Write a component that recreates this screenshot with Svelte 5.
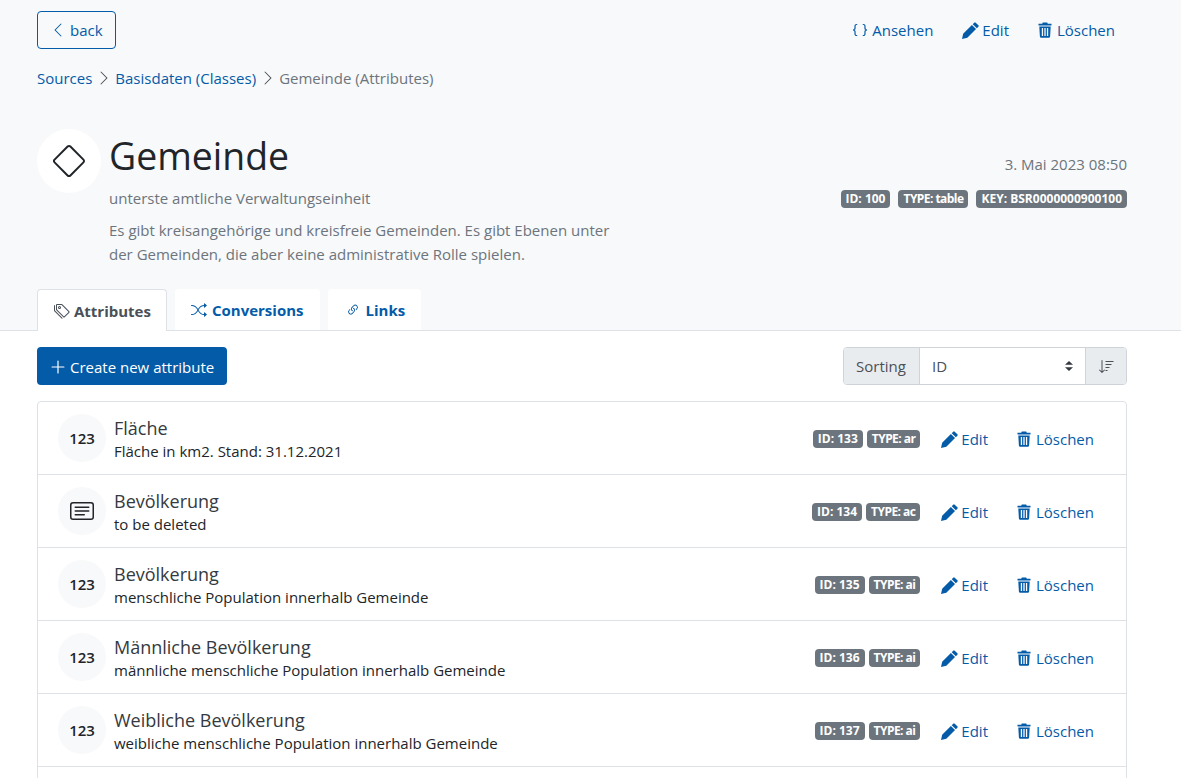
<script>
	const rows = [
		{ name: 'Fläche', desc: 'Fläche in km2. Stand: 31.12.2021', id: 133, type: 'ar', icon: 'num' },
		{ name: 'Bevölkerung', desc: 'to be deleted', id: 134, type: 'ac', icon: 'text' },
		{ name: 'Bevölkerung', desc: 'menschliche Population innerhalb Gemeinde', id: 135, type: 'ai', icon: 'num' },
		{ name: 'Männliche Bevölkerung', desc: 'männliche menschliche Population innerhalb Gemeinde', id: 136, type: 'ai', icon: 'num' },
		{ name: 'Weibliche Bevölkerung', desc: 'weibliche menschliche Population innerhalb Gemeinde', id: 137, type: 'ai', icon: 'num' }
	];
</script>

{#snippet pencil()}
	<svg viewBox="0 0 16 16" width="17" height="17" fill="currentColor"><path d="M12.900.600 15.400 3.100a1 1 0 0 1 0 1.400L14 5.900 10.100 2 11.500.600a1 1 0 0 1 1.400 0zM9.300 2.800l3.900 3.900L5 14.900 0 16l1.100-5z"/></svg>
{/snippet}

{#snippet trash()}
	<svg viewBox="0 0 14 16" width="14" height="16" fill="currentColor"><path fill-rule="evenodd" d="M4.800.500h4.400l.6 1.200H13.500V3.500H.500V1.700H4.200zM1.300 4.500h11.400l-.6 10a1.300 1.300 0 0 1-1.300 1.200H3.200a1.300 1.300 0 0 1-1.300-1.200zM3.800 6v8h1.300V6zM6.350 6v8h1.300V6zM8.900 6v8h1.300V6z"/></svg>
{/snippet}

<div class="page">
	<div class="head">
		<div class="topbar">
			<button class="back">
				<svg viewBox="0 0 16 16" width="16" height="16" fill="currentColor"><path fill-rule="evenodd" d="M11.354 1.646a.5.5 0 0 1 0 .708L5.707 8l5.647 5.646a.5.5 0 0 1-.708.708l-6-6a.5.5 0 0 1 0-.708l6-6a.5.5 0 0 1 .708 0z"/></svg>
				back
			</button>
			<div class="actions">
				<a href="#a">
					<svg viewBox="0 0 16 16" width="16" height="16" fill="currentColor"><path d="M2.114 8.063V7.900c1.005-.102 1.497-.615 1.497-1.600V4.503c0-1.094.39-1.538 1.354-1.538h.273V2h-.376C3.250 2 2.430 2.820 2.430 4.340v1.450c0 1.006-.410 1.490-1.300 1.490v1.440c.890 0 1.300.484 1.300 1.490v1.450c0 1.520.820 2.340 2.432 2.340h.376v-.965h-.273c-.964 0-1.354-.444-1.354-1.538V9.700c0-.985-.492-1.498-1.497-1.637zm11.772 0V7.900c-1.005-.102-1.497-.615-1.497-1.600V4.503c0-1.094-.39-1.538-1.354-1.538h-.273V2h.376c1.612 0 2.432.82 2.432 2.340v1.450c0 1.006.41 1.490 1.300 1.490v1.440c-.89 0-1.300.484-1.300 1.490v1.450c0 1.520-.82 2.340-2.432 2.340h-.376v-.965h.273c.964 0 1.354-.444 1.354-1.538V9.700c0-.985.492-1.498 1.497-1.637z"/></svg>
					Ansehen
				</a>
				<a class="edit" href="#e">{@render pencil()} Edit</a>
				<a class="del" href="#d">{@render trash()} Löschen</a>
			</div>
		</div>

		<nav class="crumbs">
			<a href="#s">Sources</a>
			<svg viewBox="0 0 16 16" width="16" height="16" fill="currentColor"><path fill-rule="evenodd" d="M4.646 1.646a.5.5 0 0 1 .708 0l6 6a.5.5 0 0 1 0 .708l-6 6a.5.5 0 0 1-.708-.708L10.293 8 4.646 2.354a.5.5 0 0 1 0-.708z"/></svg>
			<a href="#b">Basisdaten (Classes)</a>
			<svg viewBox="0 0 16 16" width="16" height="16" fill="currentColor"><path fill-rule="evenodd" d="M4.646 1.646a.5.5 0 0 1 .708 0l6 6a.5.5 0 0 1 0 .708l-6 6a.5.5 0 0 1-.708-.708L10.293 8 4.646 2.354a.5.5 0 0 1 0-.708z"/></svg>
			<span>Gemeinde (Attributes)</span>
		</nav>

		<div class="title-row">
			<div class="logo">
				<svg viewBox="0 0 16 16" width="32" height="32" fill="#212529"><path d="M6.950.435c.580-.580 1.520-.580 2.100 0l6.515 6.516c.58.580.58 1.519 0 2.098L9.050 15.565c-.580.580-1.519.580-2.098 0L.435 9.050a1.482 1.482 0 0 1 0-2.098L6.950.435zm1.400.7a.495.495 0 0 0-.7 0L1.134 7.650a.495.495 0 0 0 0 .700l6.516 6.516a.495.495 0 0 0 .7 0l6.516-6.516a.495.495 0 0 0 0-.7L8.350 1.134z"/></svg>
			</div>
			<div class="title-text">
				<h1>Gemeinde</h1>
				<div class="muted sub">unterste amtliche Verwaltungseinheit</div>
				<p class="muted">Es gibt kreisangehörige und kreisfreie Gemeinden. Es gibt Ebenen unter der Gemeinden, die aber keine administrative Rolle spielen.</p>
			</div>
			<div class="meta">
				<div class="muted date">3. Mai 2023 08:50</div>
				<div class="badges">
					<span class="badge">ID: 100</span>
					<span class="badge type">TYPE: table</span>
					<span class="badge">KEY: BSR0000000900100</span>
				</div>
			</div>
		</div>

		<div class="tabs">
			<a class="tab active" href="#1">
				<svg viewBox="0 0 16 16" width="16" height="16" fill="currentColor"><path d="M3 2v4.586l7 7L14.586 9l-7-7H3zM2 2a1 1 0 0 1 1-1h4.586a1 1 0 0 1 .707.293l7 7a1 1 0 0 1 0 1.414l-4.586 4.586a1 1 0 0 1-1.414 0l-7-7A1 1 0 0 1 2 6.586V2z"/><path d="M5.500 5a.5.5 0 1 1 0-1 .5.5 0 0 1 0 1zm0 1a1.500 1.500 0 1 0 0-3 1.500 1.500 0 0 0 0 3zM1 7.086a1 1 0 0 0 .293.707L8.750 15.250l-.043.043a1 1 0 0 1-1.414 0l-7-7A1 1 0 0 1 0 7.586V3a1 1 0 0 1 1-1v5.086z"/></svg>
				Attributes
			</a>
			<a class="tab conv" href="#2">
				<svg viewBox="0 0 16 16" width="16" height="16" fill="currentColor"><path fill-rule="evenodd" d="M0 3.500A.5.5 0 0 1 .5 3H1c2.202 0 3.827 1.240 4.874 2.418.49.552.865 1.102 1.126 1.532.26-.43.636-.980 1.126-1.532C9.173 4.240 10.798 3 13 3v1c-1.798 0-3.173 1.010-4.126 2.082A9.624 9.624 0 0 0 7.556 8a9.624 9.624 0 0 0 1.317 1.918C9.828 10.990 11.204 12 13 12v1c-2.202 0-3.827-1.240-4.874-2.418A10.595 10.595 0 0 1 7 9.050c-.26.430-.636.980-1.126 1.532C4.827 11.760 3.202 13 1 13H.5a.5.5 0 0 1 0-1H1c1.798 0 3.173-1.010 4.126-2.082A9.624 9.624 0 0 0 6.444 8a9.624 9.624 0 0 0-1.317-1.918C4.172 5.010 2.796 4 1 4H.5a.5.5 0 0 1-.5-.5z"/><path d="M13 5.466V1.534a.25.25 0 0 1 .41-.192l2.360 1.966c.12.100.12.284 0 .384l-2.360 1.966a.25.25 0 0 1-.41-.192zm0 9v-3.932a.25.25 0 0 1 .41-.192l2.360 1.966c.12.100.12.284 0 .384l-2.360 1.966a.25.25 0 0 1-.41-.192z"/></svg>
				Conversions
			</a>
			<a class="tab links" href="#3">
				<svg viewBox="0 0 16 16" width="14" height="14" fill="currentColor"><path d="M4.715 6.542 3.343 7.914a3 3 0 1 0 4.243 4.243l1.828-1.829A3 3 0 0 0 8.586 5.500L8 6.086a1.002 1.002 0 0 0-.154.199 2 2 0 0 1 .861 3.337L6.880 11.450a2 2 0 1 1-2.830-2.830l.793-.792a4.018 4.018 0 0 1-.128-1.287z"/><path d="M6.586 4.672A3 3 0 0 0 7.414 9.500l.775-.776a2 2 0 0 1-.896-3.346L9.120 3.550a2 2 0 1 1 2.830 2.830l-.793.792c.112.420.155.855.128 1.287l1.372-1.372a3 3 0 1 0-4.243-4.243L6.586 4.672z"/></svg>
				Links
			</a>
		</div>
	</div>

	<div class="content">
		<div class="toolbar">
			<button class="create">
				<svg viewBox="0 0 16 16" width="16" height="16" fill="currentColor"><path d="M8 1.500a.6.6 0 0 1 .6.6v5.300h5.300a.6.6 0 0 1 0 1.200H8.600v5.300a.6.6 0 0 1-1.200 0V8.600H2.100a.6.6 0 0 1 0-1.200h5.300V2.100a.6.6 0 0 1 .6-.6z"/></svg>
				Create new attribute
			</button>
			<div class="sorting">
				<span class="addon label">Sorting</span>
				<div class="select">
					ID
					<svg viewBox="0 0 16 16" width="16" height="16" fill="#343a40"><path d="M8 3 12 6.800H4zM8 13 4 9.200h8z"/></svg>
				</div>
				<span class="addon sort-btn">
					<svg viewBox="0 0 16 16" width="16" height="16" fill="#495057"><path d="M4.500 2.500a.5.500 0 0 0-1 0v10.800L1.850 11.650a.5.500 0 0 0-.7.7l2.500 2.500a.5.500 0 0 0 .7 0l2.500-2.500a.5.500 0 0 0-.7-.7L4.500 13.300zM7.500 3h8v1h-8zM7.500 6h6v1h-6zM7.500 9h4v1h-4zM7.500 12h2v1h-2z"/></svg>
				</span>
			</div>
		</div>

		<div class="list">
			{#each rows as row}
				<div class="row">
					<div class="avatar">
						{#if row.icon === 'num'}
							123
						{:else}
							<svg viewBox="0 0 16 16" width="24" height="24" fill="#212529"><path d="M14 3a1 1 0 0 1 1 1v8a1 1 0 0 1-1 1H2a1 1 0 0 1-1-1V4a1 1 0 0 1 1-1h12zM2 2a2 2 0 0 0-2 2v8a2 2 0 0 0 2 2h12a2 2 0 0 0 2-2V4a2 2 0 0 0-2-2H2z"/><path d="M3 5.500a.5.5 0 0 1 .5-.5h9a.5.5 0 0 1 0 1h-9a.5.5 0 0 1-.5-.5zM3 8a.5.5 0 0 1 .5-.5h9a.5.5 0 0 1 0 1h-9A.5.5 0 0 1 3 8zm0 2.500a.5.5 0 0 1 .5-.5h6a.5.5 0 0 1 0 1h-6a.5.5 0 0 1-.5-.5z"/></svg>
						{/if}
					</div>
					<div class="row-text">
						<div class="row-name">{row.name}</div>
						<div class="row-desc">{row.desc}</div>
					</div>
					<div class="row-badges">
						<span class="badge">ID: {row.id}</span>
						<span class="badge type">TYPE: {row.type}</span>
					</div>
					<a class="row-link edit" href="#e">{@render pencil()} Edit</a>
					<a class="row-link del" href="#d">{@render trash()} Löschen</a>
				</div>
			{/each}
			<div class="row-more"></div>
		</div>
	</div>
</div>

<style>
	:global(*) {
		box-sizing: border-box;
	}

	:global(html), :global(body) {
		overflow: hidden;
	}

	:global(body) {
		background: #fff;
		color: #212529;
		font-family: 'Open Sans', 'Noto Sans', sans-serif;
		font-size: 15px;
		line-height: 24px;
	}

	.page {
		height: 778px;
		overflow: hidden;
	}

	a {
		color: #045ba8;
		text-decoration: none;
	}

	svg {
		display: block;
		flex-shrink: 0;
	}

	.head {
		background: #f8f9fa;
		border-bottom: 1px solid #dee2e6;
		height: 331px;
		padding: 11px 54px 0 37px;
		display: flex;
		flex-direction: column;
	}

	.topbar {
		display: flex;
		justify-content: space-between;
	}

	.back {
		display: flex;
		align-items: center;
		gap: 4px;
		width: 79px;
		height: 38px;
		padding: 0 0 0 12px;
		background: transparent;
		border: 1px solid #045ba8;
		border-radius: 4px;
		color: #045ba8;
		font: inherit;
	}

	.actions {
		display: flex;
		align-items: center;
		gap: 29px;
		padding-right: 12px;
		height: 38px;
	}

	.actions a {
		display: flex;
		align-items: center;
		gap: 4px;
	}

	.actions a.edit {
		gap: 3px;
	}

	.actions a.del {
		gap: 5px;
	}

	.crumbs {
		display: flex;
		align-items: center;
		gap: 3.5px;
		margin-top: 17px;
		height: 24px;
		color: #6c757d;
	}

	.crumbs svg {
		color: #495057;
	}

	.title-row {
		display: flex;
		margin-top: 39px;
	}

	.logo {
		width: 64px;
		height: 64px;
		border-radius: 50%;
		background: #fff;
		display: flex;
		align-items: center;
		justify-content: center;
		flex-shrink: 0;
	}

	.title-text {
		margin-left: 8px;
		width: 520px;
	}

	h1 {
		margin: -1px 0 0;
		font-size: 37.4px;
		font-weight: 400;
		line-height: 56px;
	}

	.muted {
		color: #6c757d;
	}

	.sub {
		margin-top: 2px;
	}

	.title-text p {
		margin: 8px 0 0;
		line-height: 24px;
	}

	.meta {
		margin-left: auto;
		text-align: right;
		padding-top: 23px;
	}

	.badges {
		display: flex;
		justify-content: flex-end;
		gap: 8px;
		margin-top: 14px;
	}

	.badge {
		display: inline-block;
		padding: 0 5px;
		height: 18px;
		line-height: 18px;
		background: #6c757d;
		color: #fff;
		font-size: 12px;
		font-weight: 700;
		border-radius: 4px;
		white-space: nowrap;
	}

	.badge.type {
		letter-spacing: -0.55px;
	}

	.tabs {
		display: flex;
		gap: 8px;
		margin-top: auto;
		height: 41px;
	}

	.tab {
		display: flex;
		align-items: center;
		gap: 4px;
		padding: 0 16px;
		background: #fff;
		border-radius: 4px 4px 0 0;
		font-weight: 700;
	}

	.tab.active {
		color: #495057;
		border: 1px solid #dee2e6;
		border-bottom: 0;
		padding: 0 15px 0 16px;
		height: 42px;
		position: relative;
	}

	.tab.conv {
		gap: 5px;
		padding-right: 16px;
	}

	.tab.links {
		gap: 6px;
		padding: 0 16px 0 18px;
	}

	.content {
		padding: 16px 54px 0 37px;
	}

	.toolbar {
		display: flex;
		justify-content: space-between;
	}

	.create {
		display: flex;
		align-items: center;
		gap: 4px;
		width: 190px;
		height: 38px;
		padding: 1px 0 0 13px;
		background: #045ba8;
		border: 0;
		border-radius: 4px;
		color: #fff;
		font: inherit;
	}

	.sorting {
		display: flex;
		height: 38px;
		width: 284px;
		border: 1px solid #ced4da;
		border-radius: 4px;
		overflow: hidden;
	}

	.addon {
		display: flex;
		align-items: center;
		padding: 0 12px;
		background: #e9ecef;
		color: #495057;
	}

	.label {
		width: 75px;
	}

	.select {
		flex: 1;
		display: flex;
		align-items: center;
		justify-content: space-between;
		padding: 0 8px 0 12px;
		background: #fff;
		color: #495057;
		border-left: 1px solid #ced4da;
		border-right: 1px solid #ced4da;
	}

	.sort-btn {
		width: 40px;
	}

	.list {
		margin-top: 16px;
		border: 1px solid #dee2e6;
		border-radius: 4px;
	}

	.row {
		display: flex;
		align-items: center;
		height: 73px;
		padding: 0 32px 0 20px;
		border-bottom: 1px solid #dee2e6;
	}

	.row-more {
		height: 40px;
	}

	.avatar {
		width: 48px;
		height: 48px;
		border-radius: 50%;
		background: #f8f9fa;
		display: flex;
		align-items: center;
		justify-content: center;
		font-weight: 600;
		flex-shrink: 0;
	}

	.row-text {
		margin: 2px 0 0 8px;
	}

	.row-name {
		font-size: 18px;
		line-height: 24px;
		color: #343a40;
	}

	.row-desc {
		line-height: 22px;
	}

	.row-badges {
		margin: 2px 0 0 auto;
		display: flex;
		gap: 4px;
	}

	.row-link {
		display: flex;
		align-items: center;
		margin-top: 2px;
	}

	.row-link.edit {
		gap: 3px;
		margin-left: 21px;
	}

	.row-link.del {
		gap: 5px;
		margin-left: 29px;
	}
</style>
